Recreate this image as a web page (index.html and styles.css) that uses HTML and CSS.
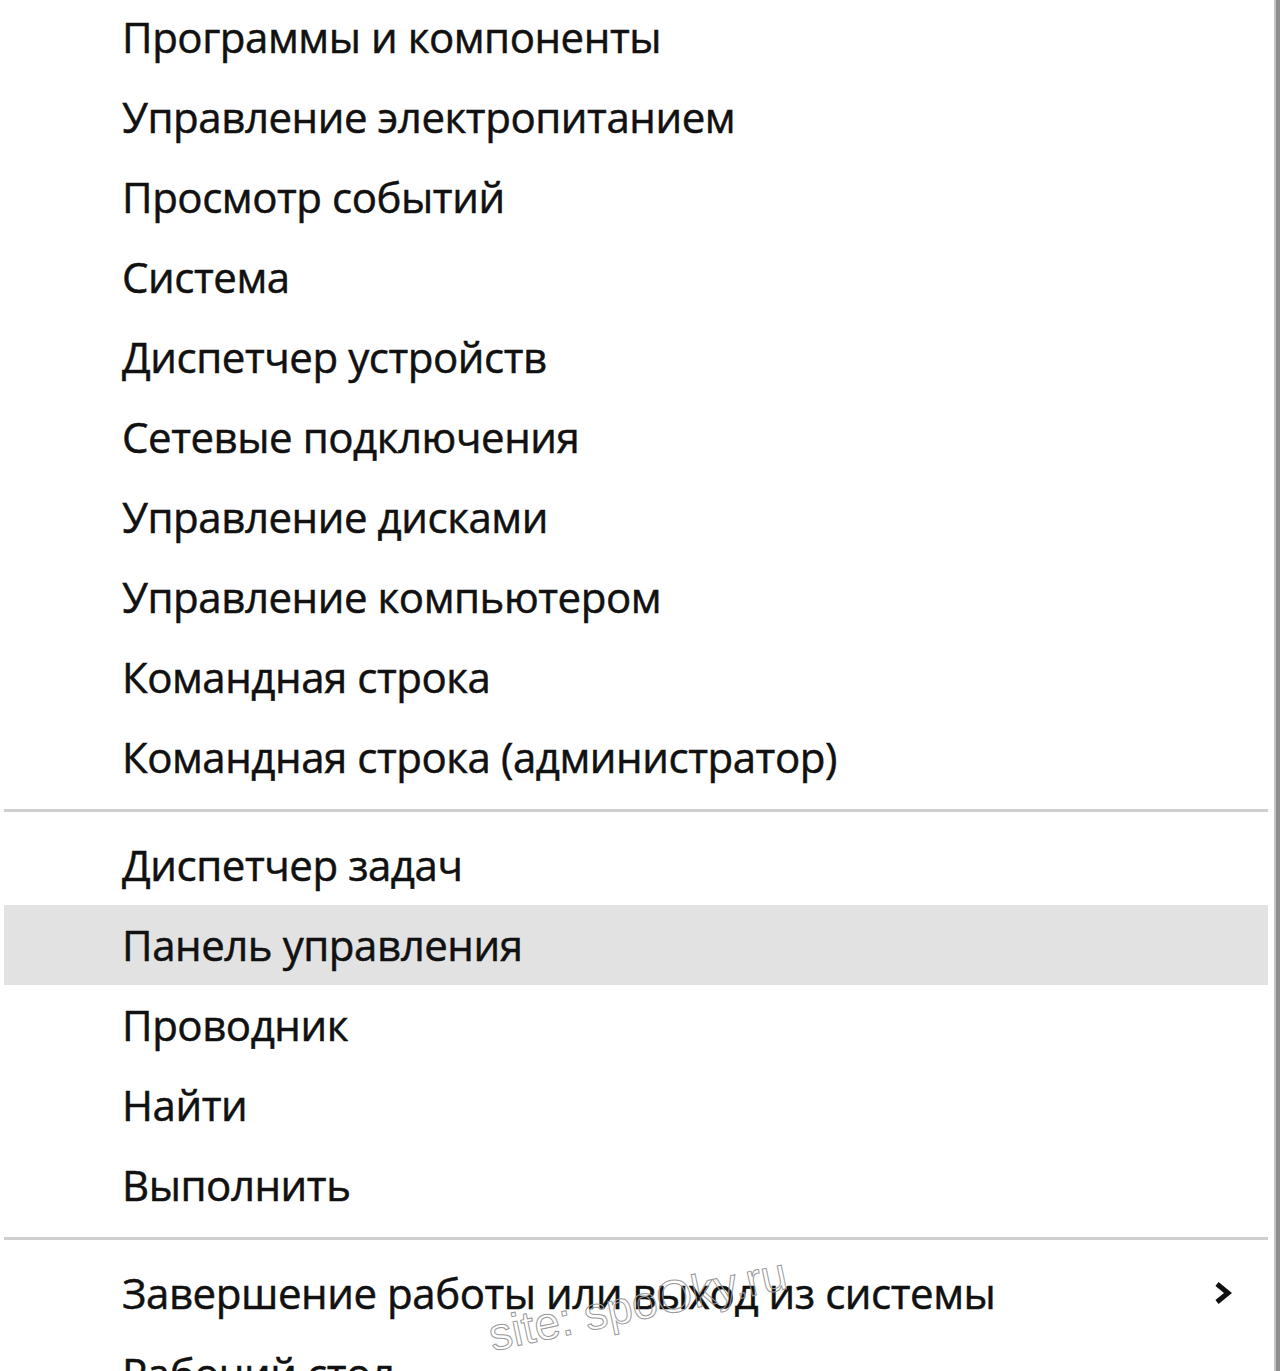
FILE: index.html
```html
<!DOCTYPE html>
<html lang="ru">
<head>
<meta charset="utf-8">
<title>Win+X menu</title>
<link rel="stylesheet" href="styles.css">
</head>
<body>
<div class="menu">
  <ul class="group group-first">
    <li class="item">Программы и компоненты</li>
    <li class="item">Управление электропитанием</li>
    <li class="item">Просмотр событий</li>
    <li class="item">Система</li>
    <li class="item">Диспетчер устройств</li>
    <li class="item">Сетевые подключения</li>
    <li class="item">Управление дисками</li>
    <li class="item">Управление компьютером</li>
    <li class="item">Командная строка</li>
    <li class="item">Командная строка (администратор)</li>
  </ul>
  <div class="sep"></div>
  <ul class="group">
    <li class="item">Диспетчер задач</li>
    <li class="item item-hover">Панель управления</li>
    <li class="item">Проводник</li>
    <li class="item">Найти</li>
    <li class="item">Выполнить</li>
  </ul>
  <div class="sep"></div>
  <ul class="group">
    <li class="item item-sub"><span>Завершение работы или выход из системы</span>
      <svg class="chev" width="20" height="26" viewBox="0 0 20 26"><polyline points="4,4 15,13 4,22" fill="none" stroke="#111" stroke-width="5" stroke-linejoin="miter"/></svg>
    </li>
    <li class="item">Рабочий стол</li>
  </ul>
  <div class="watermark">site: spoOky.ru</div>
</div>
</body>
</html>
```
FILE: styles.css
```css
html, body {
  margin: 0;
  padding: 0;
  background: #fff;
  height: 1371px;
  overflow: hidden;
}
.menu {
  position: relative;
  width: 1280px;
  height: 1371px;
  box-sizing: border-box;
  padding: 0 8px 0 4px;
  border-right: 4px solid #8e8e8e;
  box-shadow: inset -2px 0 0 #c4c4c4;
  font-family: "Open Sans", "Noto Sans", sans-serif;
  font-size: 42px;
  letter-spacing: -0.45px;
  color: #111;
  overflow: hidden;
}
.group {
  list-style: none;
  margin: 0;
  padding: 0;
  -webkit-text-stroke: 0.5px #111;
}
.group-first {
  margin-top: -3px;
}
.item {
  height: 80px;
  line-height: 80px;
  padding-left: 118px;
  white-space: nowrap;
  display: flex;
  align-items: center;
}
.item-hover {
  background: #e2e2e2;
}
.item-sub {
  justify-content: space-between;
  padding-right: 35px;
}
.chev {
  display: block;
}
.sep {
  height: 3px;
  margin: 12px 0 13px;
  background: #cfcfcf;
}
.watermark {
  position: absolute;
  left: 494px;
  top: 1312px;
  font-family: "Liberation Sans", Arial, sans-serif;
  font-size: 46px;
  letter-spacing: 0;
  line-height: 1;
  color: transparent;
  -webkit-text-stroke: 1px #9a9a9a;
  transform: rotate(-12deg);
  transform-origin: left bottom;
  white-space: nowrap;
}
```
